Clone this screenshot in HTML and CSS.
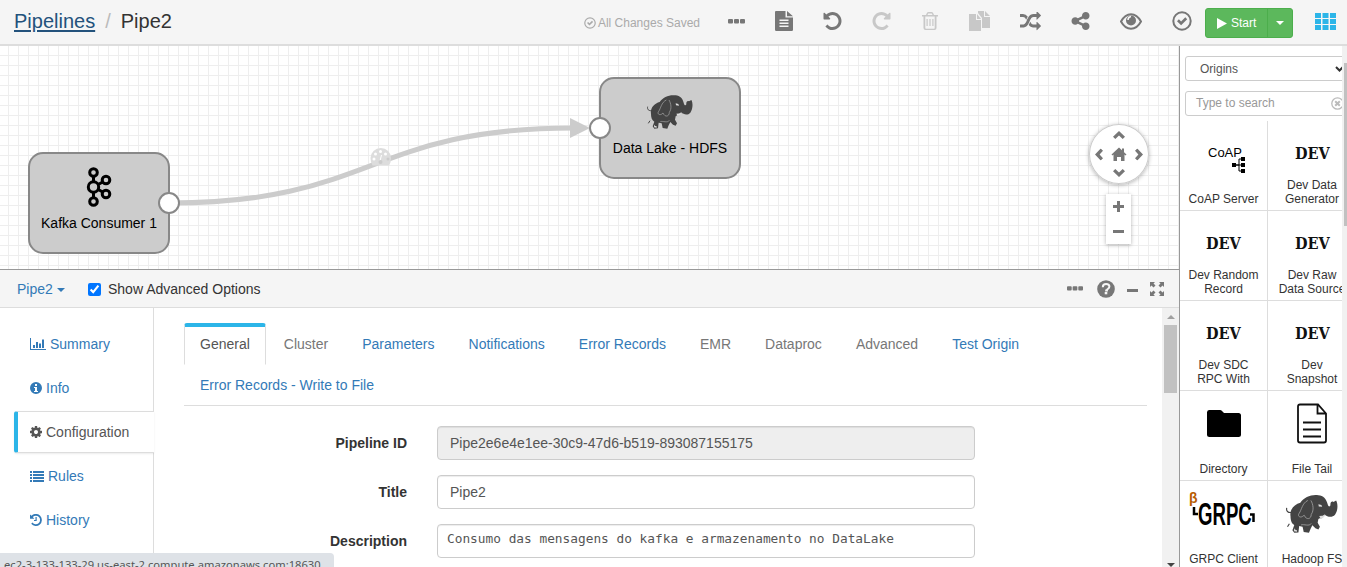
FILE: index.html
```html
<!DOCTYPE html>
<html lang="en">
<head>
<meta charset="utf-8">
<title>Pipe2</title>
<link rel="stylesheet" href="styles.css">
</head>
<body>
<svg class="defs" aria-hidden="true">
  <symbol id="dots" viewBox="0 0 17 5"><rect width="5" height="4.5" rx="1"/><rect x="6" width="5" height="4.5" rx="1"/><rect x="12" width="5" height="4.5" rx="1"/></symbol>
  <symbol id="undo" viewBox="128 128 1536 1536"><path d="M1664 896q0 156-61 298t-164 245-245 164-298 61q-172 0-327-72.500t-264-204.500q-7-10-6.500-22.500t8.500-20.500l137-138q10-9 25-9 16 2 23 12 73 95 179 147t225 52q104 0 198.500-40.500t163.500-109.500 109.500-163.500 40.500-198.500-40.500-198.500-109.500-163.500-163.500-109.500-198.500-40.500q-98 0-188 35.500t-160 101.500l137 138q31 30 14 69-17 40-59 40h-448q-26 0-45-19t-19-45v-448q0-42 40-59 39-17 69 14l130 129q107-101 244.500-156.500t284.500-55.500q156 0 298 61t245 164 164 245 61 298z"/></symbol>
  <symbol id="check" viewBox="0 0 20 20"><circle cx="10" cy="10" r="8.700" fill="none" stroke="currentColor" stroke-width="2"/><path d="M5 10.200l1.900-1.900 2.200 2.200 4.200-4.200 1.900 1.900-6.100 6.100z"/></symbol>
  <symbol id="elephant" viewBox="0 0 138 108">
    <path d="M12 60C9 42 22 28 38 24C48 9 68 1 86 4C99 5 107 14 110 26C112 35 116 36 118 31C117 24 121 19 126 22L133 18C139 28 137 47 130 56C123 64 111 63 102 55C98 59 92 64 86 67L84 77L90 88L86 95L78 92L70 84L65 94L61 104L47 102L44 88L35 86L33 103L22 104L17 97L22 83C14 79 12 69 12 60Z"/>
    <path d="M14 50C5 51 0 46 2 38M9 80L4 88" fill="none" stroke="currentColor" stroke-width="3"/>
    <path class="line" d="M58 18C43 25 41 44 35 52C29 60 39 67 48 57C54 71 67 68 67 55C75 44 72 28 66 18M40 83C47 80 62 88 67 79M103 56Q96 68 88 66"/>
    <path class="light" d="M86 28l8 2 2 5-9-1zM103 58q-2 7-11 8l-4-7zM22 92q2 5 7 5v4l-8-1z"/>
  </symbol>
  <symbol id="chev" viewBox="0 0 12 8"><path d="M6 0l6 5.700L9.700 8 6 4.600 2.300 8 0 5.700z"/></symbol>
</svg>

<header class="topbar">
  <div class="crumbs"><a>Pipelines</a><span class="slash">/</span><span>Pipe2</span></div>
  <div class="actions">
    <span class="saved"><svg width="12" height="12"><use href="#check"/></svg>All Changes Saved</span>
    <div class="tools">
      <svg width="17" height="5"><use href="#dots"/></svg>
      <svg width="18" height="20" viewBox="0 0 18 20"><path fill-rule="evenodd" d="M1 0h9.500v6.500h7.500v12.300q0 1.200-1.200 1.200H1.200Q0 20 0 18.800V1Q0 0 1 0zM4.500 8.500v1.500h9V8.500zm0 3v1.500h9v-1.500zm0 3v1.500h9v-1.500zM12 0l6 5.300h-6z"/></svg>
      <svg width="19" height="18"><use href="#undo"/></svg>
      <svg class="off" width="19" height="18" viewBox="0 0 19 18"><g transform="matrix(-1 0 0 1 19 0)"><use href="#undo" width="19" height="18"/></g></svg>
      <svg class="off" width="18" height="18" viewBox="0 0 18 18"><path fill-rule="evenodd" d="M1 3h4l1-2.300Q6.500 0 7.500 0h3q1 0 1.500.7L13 3h4v1.500h-1.500V16q0 2-2 2h-9q-2 0-2-2V4.500H1zM6.500 3h5l-.7-1.500H7.200zM4.300 4.500V16q0 .7.7.7h8q.7 0 .7-.7V4.500zM5.500 7h1.200v7H5.500zm2.900 0h1.200v7H8.400zm2.900 0h1.200v7h-1.200z"/></svg>
      <svg class="off" width="21" height="20" viewBox="0 0 21 20"><path d="M0 3h7v6h5v11H0zM8 3l4 5H8zM9 0h6v6h6v11h-8V7L9 2zM16 0l5 5h-5z"/></svg>
      <svg width="21" height="19" viewBox="0 160 1792 1472"><path d="M666 481q-60 92-137 273-22-45-37-72.500t-40.500-63.500-51-56.500-63-35-81.500-14.500h-224q-14 0-23-9t-9-23v-192q0-14 9-23t23-9h224q250 0 410 225zm1126 799q0 14-9 23l-320 320q-9 9-23 9-13 0-22.500-9.500t-9.500-22.500v-192q-32 0-85 .5t-81 1-73-1-71-5-64-10.500-63-18.500-58-28.500-59-40-55-53.500-56-69.500q59-93 136-273 22 45 37 72.500t40.500 63.500 51 56.500 63 35 81.500 14.500h256v-192q0-14 9-23t23-9q12 0 24 10l319 319q9 9 9 23zm0-896q0 14-9 23l-320 320q-9 9-23 9-13 0-22.500-9.500t-9.500-22.500v-192h-256q-48 0-87 15t-69 45-51 61.500-45 77.500q-32 62-78 171-29 66-49.500 111t-54 105-64 100-74 83-90 68.500-106.500 42-128 16.500h-224q-14 0-23-9t-9-23v-192q0-14 9-23t23-9h224q48 0 87-15t69-45 51-61.500 45-77.500q32-62 78-171 29-66 49.500-111t54-105 64-100 74-83 90-68.500 106.500-42 128-16.500h256v-192q0-14 9-23t23-9q12 0 24 10l319 319q9 9 9 23z"/></svg>
      <svg width="19" height="18" viewBox="128 128 1536 1536"><path d="M1344 1024q133 0 226.500 93.500t93.500 226.500-93.500 226.500-226.500 93.500-226.500-93.500-93.500-226.500q0-12 2-34l-360-180q-92 86-218 86-133 0-226.500-93.500t-93.500-226.500 93.500-226.500 226.500-93.500q126 0 218 86l360-180q-2-22-2-34 0-133 93.500-226.500t226.500-93.500 226.500 93.500 93.500 226.500-93.500 226.500-226.500 93.500q-126 0-218-86l-360 180q2 22 2 34t-2 34l360 180q92-86 218-86z"/></svg>
      <svg width="22" height="17" viewBox="0 0 22 17"><path d="M1 8.500Q5 1.200 11 1.200T21 8.500Q17 15.800 11 15.800T1 8.500z" fill="none" stroke="currentColor" stroke-width="2"/><circle cx="11" cy="7.500" r="5"/><path d="M8 7q0-3 3-3.500" fill="none" stroke="#f5f5f5" stroke-width="1.500"/></svg>
      <svg width="20" height="20"><use href="#check"/></svg>
    </div>
    <div class="start"><span class="go"><svg width="10" height="11" viewBox="0 0 10 11"><path d="M0 0l10 5.500L0 11z"/></svg>Start</span><span class="more"><i class="caret"></i></span></div>
    <svg class="apps" width="21" height="17" viewBox="0 0 21 17"><path d="M0 0h6v5H0zM7.500 0h6v5h-6zM15 0h6v5h-6zM0 6h6v5H0zM7.500 6h6v5h-6zM15 6h6v5h-6zM0 12h6v5H0zM7.500 12h6v5h-6zM15 12h6v5h-6z"/></svg>
  </div>
</header>

<div class="workspace">
  <main class="main">
    <section class="canvas">
      <svg class="graph" width="1179" height="224" viewBox="0 45 1179 224">
        <path class="edge" d="M169 203C374 203 368 128 574 128"/>
        <path class="arrow" d="M570 118l20 10-20 10z"/>
        <g><path class="gauge" d="M370.500 158a10.300 10 0 0 1 20.600 0q0 4-2 7.500h-16.600q-2-3.500-2-7.500z"/><g fill="#fff"><circle cx="374" cy="159" r="1.500"/><circle cx="375.500" cy="154" r="1.500"/><circle cx="380.500" cy="151.500" r="1.500"/><circle cx="385.500" cy="154" r="1.500"/></g><circle cx="388" cy="159" r="1.500" fill="#ccc"/><path d="M380 161l1.500-6" stroke="#fff"/><circle cx="380.500" cy="162" r="2" fill="#ccc"/></g>
        <rect class="node" x="29" y="153" width="140" height="100" rx="14"/>
        <rect class="node" x="600" y="78" width="140" height="100" rx="14"/>
        <g class="kafka"><path d="M93.500 173v28M94 187l12-7M94 187l12 7"/><circle cx="93.500" cy="172.500" r="3.800"/><circle cx="93.500" cy="187" r="5.200"/><circle cx="93.500" cy="201.500" r="3.800"/><circle cx="106" cy="180" r="3.800"/><circle cx="106" cy="194" r="3.800"/></g>
        <use class="eleph" href="#elephant" x="647" y="94" width="46" height="36"/>
        <circle class="port" cx="169" cy="203" r="10"/><circle class="port" cx="600" cy="128" r="10"/>
        <text x="99" y="228">Kafka Consumer 1</text><text x="670" y="153">Data Lake - HDFS</text>
      </svg>
      <div class="pan"><svg width="60" height="60" viewBox="0 0 60 60"><use href="#chev" x="24" y="7" width="12" height="8"/><use href="#chev" x="24" y="7" width="12" height="8" transform="rotate(180 30 30)"/><use href="#chev" x="24" y="6.500" width="12" height="8" transform="rotate(90 30 30.500)"/><use href="#chev" x="24" y="6.500" width="12" height="8" transform="rotate(270 30 30.500)"/><path d="M30 23.500l7.500 7-1 1-1-.9V37h-3.500v-4h-4v4h-3.500v-6.400l-1 .9-1-1zM33 24.500h2v3.500h-2z"/></svg></div>
      <div class="zoom"><svg width="25" height="50" viewBox="0 0 25 50"><path d="M11 7h3v4h4v3h-4v4h-3v-4H7v-3h4zM7 36h11v3H7z"/></svg></div>
    </section>

    <section class="detail">
      <div class="detail-head">
        <a class="pipe">Pipe2 <i class="caret"></i></a>
        <label class="adv"><input type="checkbox" checked>Show Advanced Options</label>
        <div class="head-icons">
          <svg width="16" height="5"><use href="#dots"/></svg>
          <svg class="help" width="18" height="18" viewBox="0 0 18 18"><circle cx="9" cy="9" r="8.800"/><path d="M5.800 7.200q0-3.300 3.300-3.300t3.300 2.700q0 1.500-1.500 2.300-1 .5-1 1.600H8.200" fill="none" stroke="#f5f5f5" stroke-width="2"/><path d="M7.700 12h2.600v2.300H7.700z" fill="#f5f5f5"/></svg>
          <svg class="min" width="11" height="3" viewBox="0 0 11 3"><rect width="11" height="3"/></svg>
          <svg width="14" height="14" viewBox="0 0 14 14"><path id="cor" d="M0 0h5L3.500 1.500 5.500 3.500 3.500 5.500 1.500 3.500 0 5z"/><use href="#cor" transform="rotate(90 7 7)"/><use href="#cor" transform="rotate(180 7 7)"/><use href="#cor" transform="rotate(270 7 7)"/></svg>
        </div>
      </div>
      <div class="detail-body">
        <nav class="side">
          <a><svg width="16" height="12" viewBox="0 0 16 12"><path d="M0 0h1v11h15v1H0zM3 7h2v3H3zM6 4h2v6H6zM9 5.500h2V10H9zM12 1.500h2V10h-2z"/></svg>Summary</a>
          <a><svg width="12" height="12" viewBox="0 0 12 12"><path fill-rule="evenodd" d="M6 0a6 6 0 1 1 0 12A6 6 0 0 1 6 0zM5 2v2h2V2zM4 5v1h1v3H4v1h4V9H7V5z"/></svg>Info</a>
          <a class="active"><svg width="12" height="12" viewBox="128 128 1536 1536"><path d="M1152 896q0-106-75-181t-181-75-181 75-75 181 75 181 181 75 181-75 75-181zm512-109v222q0 12-8 23t-20 13l-185 28q-19 54-39 91 35 50 107 138 10 12 10 25t-9 23q-27 37-99 108t-94 71q-12 0-26-9l-138-108q-44 23-91 38-16 136-29 186-7 28-36 28h-222q-14 0-24.500-8.500t-11.500-21.500l-28-184q-49-16-90-37l-141 107q-10 9-25 9-14 0-25-11-126-114-165-168-7-10-7-23 0-12 8-23 15-21 51-66.500t54-70.500q-27-50-41-99l-183-27q-13-2-21-12.500t-8-23.500v-222q0-12 8-23t19-13l186-28q14-46 39-92-40-57-107-138-10-12-10-24 0-10 9-23 26-36 98.500-107.500t94.500-71.500q13 0 26 10l138 107q44-23 91-38 16-136 29-186 7-28 36-28h222q14 0 24.500 8.500t11.500 21.500l28 184q49 16 90 37l142-107q9-9 24-9 13 0 25 10 129 119 165 170 7 8 7 22 0 12-8 23-15 21-51 66.500t-54 70.500q26 50 41 98l183 28q13 2 21 12.500t8 23.500z"/></svg>Configuration</a>
          <a><svg width="14" height="11" viewBox="0 0 14 11"><path d="M0 0h2v2H0zM3 0h11v2H3zM0 3h2v2H0zM3 3h11v2H3zM0 6h2v2H0zM3 6h11v2H3zM0 9h2v2H0zM3 9h11v2H3z"/></svg>Rules</a>
          <a><svg width="12" height="12" viewBox="0 0 12 12"><path d="M0 .5l1.500 1.300A6 6 0 1 1 1.200 9.700L2.500 8.500A4.200 4.200 0 1 0 2.800 3.100L4.300 4.700H0zM5.500 3h1.200v4H4V5.900h1.500z"/></svg>History</a>
        </nav>
        <div class="content">
          <div class="tabs">
            <a class="on">General</a><a class="dim">Cluster</a><a>Parameters</a><a>Notifications</a><a>Error Records</a><a class="dim">EMR</a><a class="dim">Dataproc</a><a class="dim">Advanced</a><a>Test Origin</a><a>Error Records - Write to File</a>
          </div>
          <div class="form">
            <label>Pipeline ID</label><div class="field ro">Pipe2e6e4e1ee-30c9-47d6-b519-893087155175</div>
            <label>Title</label><div class="field">Pipe2</div>
            <label>Description</label><div class="field code">Consumo das mensagens do kafka e armazenamento no DataLake</div>
          </div>
        </div>
        <div class="vscroll"><i class="up"></i><i class="thumb"></i><i class="down"></i></div>
      </div>
    </section>
  </main>

  <aside class="library">
    <div class="lib-inner">
      <div class="select">Origins<svg width="9" height="6" viewBox="0 0 9 6"><path d="M1 1l3.500 3.500L8 1" fill="none" stroke="#333" stroke-width="2"/></svg></div>
      <div class="search">Type to search<svg width="13" height="13" viewBox="0 0 13 13"><circle cx="6.500" cy="6.500" r="5.700" fill="none" stroke="#bbb" stroke-width="1.300"/><path d="M4.200 4.200l4.600 4.600m0-4.600L4.200 8.800" stroke="#bbb" stroke-width="2"/></svg></div>
      <div class="stages">
        <div class="stage"><svg width="60" height="42" viewBox="0 0 60 42"><text class="coap" x="14" y="24">CoAP</text><path d="M39 32h6v-6h5M39 32h11M45 32v6h5" fill="none" stroke="#000"/><path d="M47 24h4v4h-4zM47 30h4v4h-4zM47 36h4v4h-4zM38 30h4v4h-4z"/></svg><span>CoAP Server</span></div>
        <div class="stage"><b>DEV</b><span>Dev Data<br>Generator</span></div>
        <div class="stage"><b>DEV</b><span>Dev Random<br>Record</span></div>
        <div class="stage"><b>DEV</b><span>Dev Raw<br>Data Source</span></div>
        <div class="stage"><b>DEV</b><span>Dev SDC<br>RPC With</span></div>
        <div class="stage"><b>DEV</b><span>Dev<br>Snapshot</span></div>
        <div class="stage"><svg width="60" height="42" viewBox="0 0 60 42"><path d="M15 7q-2 0-2 2.500v22q0 2.500 2.500 2.500h29q2.500 0 2.500-2.500v-19q0-2.500-2.500-2.500H30l-2-2q-.7-1-2-1z"/></svg><span>Directory</span></div>
        <div class="stage"><svg width="60" height="42" viewBox="0 0 60 42"><path d="M18 1.500h18l8 9v27q0 2-2 2H18q-2 0-2-2v-34q0-2 2-2zM35.500 2v8.500h8M21 19.500h18M21 26.500h18M21 33.500h18" fill="none" stroke="#111" stroke-width="1.800"/></svg><span>File Tail</span></div>
        <div class="stage"><svg class="grpc" width="80" height="42" viewBox="0 0 80 42"><text class="beta" x="5" y="10">β</text><text class="g" transform="matrix(.6 0 0 1 14 32)">GRPC</text><path d="M10 14v7h4M66 21.500h3.500V29" fill="none" stroke="#000" stroke-width="2.500"/></svg><span>GRPC Client</span></div>
        <div class="stage"><svg class="eleph" width="52" height="42"><use href="#elephant"/></svg><span>Hadoop FS</span></div>
      </div>
    </div>
    <div class="lib-scroll"><i></i></div>
  </aside>
</div>
<div class="status">ec2-3-133-133-29.us-east-2.compute.amazonaws.com:18630</div>
</body>
</html>
```
FILE: styles.css
```css
* { box-sizing: border-box; }
body { margin: 0; width: 1347px; height: 567px; overflow: hidden; position: relative; font: 14px/20px "Liberation Sans", Arial, sans-serif; color: #333; background: #fff; }
svg { display: block; fill: currentColor; flex: none; }
.defs { position: absolute; width: 0; height: 0; }
.caret { display: inline-block; border: 4px solid transparent; border-top-color: currentColor; border-bottom: 0; vertical-align: middle; }

.topbar { height: 46px; background: #f5f5f5; border-bottom: 2px solid #ddd; display: flex; justify-content: space-between; padding: 0 11px 0 14px; }
.crumbs { font-size: 20px; line-height: 42px; }
.crumbs a { color: #23527c; text-decoration: underline; text-decoration-thickness: 2px; text-underline-offset: 2px; text-decoration-skip-ink: auto; }
.slash { color: #bbb; margin: 0 10px; }
.actions { display: flex; align-items: center; color: #777; height: 42px; }
.saved { display: flex; align-items: center; gap: 2px; font-size: 12px; color: #aaa; margin-right: 28px; padding-top: 3px; }
.tools { display: flex; align-items: center; gap: 30px; margin-right: 13px; }
.off { color: #c8c8c8; }
.start { display: flex; width: 88px; height: 30px; margin: 4px 22px 0 0; color: #fff; background: #5cb85c; border: 1px solid #4cae4c; border-radius: 3px; font-size: 12px; }
.go { display: flex; align-items: center; gap: 4px; width: 62px; padding-left: 11px; border-right: 1px solid #4cae4c; }
.more { flex: 1; display: flex; align-items: center; justify-content: center; }
.apps { color: #2cb5e8; }

.workspace { display: flex; height: 521px; }
.main { width: 1180px; border-right: 1px solid #999; display: flex; flex-direction: column; }
.canvas { position: relative; height: 223px; overflow: hidden; background-image: linear-gradient(to right, #eee 1px, transparent 1px), linear-gradient(#eee 1px, transparent 1px); background-size: 10px 10px; background-position: 8px 9px; }
.graph { margin-top: -1px; }
.graph text { font-size: 14px; text-anchor: middle; fill: #000; }
.edge { fill: none; stroke: #ccc; stroke-width: 5; }
.arrow { fill: #ccc; }
.gauge { fill: #ddd; }
.node { fill: #ccc; stroke: #888; stroke-width: 2; }
.port { fill: #fff; stroke: #888; stroke-width: 2; }
.kafka { fill: none; stroke: #000; stroke-width: 3; }
.kafka circle { fill: #ccc; }
.eleph { color: #444; fill: #444; }
.line { fill: none; stroke: #aaa; stroke-width: 2; }
.light { fill: #ddd; }
.pan { position: absolute; left: 1089px; top: 78px; width: 60px; height: 60px; border-radius: 50%; background: #fff; color: #777; box-shadow: inset 0 0 0 1px #ccc, 0 1px 4px rgba(0,0,0,.3); }
.zoom { position: absolute; left: 1106px; top: 148px; width: 25px; height: 50px; background: #fff; color: #777; box-shadow: 0 1px 4px rgba(0,0,0,.3); }

.detail { flex: 1; border-top: 1px solid #999; display: flex; flex-direction: column; min-height: 0; }
.detail-head { height: 38px; background: #f5f5f5; border-bottom: 1px solid #ddd; display: flex; align-items: center; padding: 0 15px 0 17px; }
.pipe { color: #337ab7; width: 71px; }
.adv { display: flex; align-items: center; gap: 7px; }
.adv input { margin: 1px 0 0; width: 13px; height: 13px; }
.head-icons { margin-left: auto; display: flex; align-items: center; color: #777; }
.help { margin: 0 12px 0 14px; }
.min { margin: 3px 12px 0 0; }
.detail-body { flex: 1; display: flex; min-height: 0; background: #fff; overflow: hidden; }
.side { width: 154px; padding: 15px 0 0 14px; display: flex; flex-direction: column; gap: 2px; background: linear-gradient(#ddd, #ddd) right / 1px 100% no-repeat; }
.side a { display: flex; align-items: center; gap: 4px; height: 42px; padding-left: 16px; color: #337ab7; flex: none; }
.side .active { color: #555; background: #fff; border: 1px solid #ddd; border-left: 4px solid #2cb5e8; border-right: 0; border-radius: 3px 0 0 3px; padding-left: 12px; box-shadow: 0 1px 2px rgba(0,0,0,.08); }
.content { width: 1008px; padding: 15px 15px 0 30px; }
.tabs { display: flex; flex-wrap: wrap; border-bottom: 1px solid #ddd; }
.tabs a { height: 42px; margin: 0 2px -1px 0; padding: 11px 16px; color: #337ab7; }
.tabs .dim { color: #777; }
.tabs .on { color: #555; border: 1px solid #ddd; border-top: 4px solid #2cb5e8; border-bottom-color: transparent; border-radius: 3px 3px 0 0; padding: 7px 15px; }
.form { display: grid; grid-template-columns: 223px 538px; column-gap: 30px; row-gap: 15px; padding-top: 20px; }
.form label { font-weight: bold; text-align: right; line-height: 34px; }
.field { height: 34px; border: 1px solid #ccc; border-radius: 4px; padding: 6px 12px; color: #555; box-shadow: inset 0 1px 1px rgba(0,0,0,.075); white-space: nowrap; }
.ro { background: #eee; }
.code { font: 12.800px/18px "DejaVu Sans Mono", monospace; padding: 5px 9px; }
.vscroll { width: 17px; background: #f1f1f1; display: flex; flex-direction: column; align-items: center; height: 259px; }
.up { border: 4px solid transparent; border-bottom-color: #a0a0a0; border-top: 0; margin: 7px 0 6px; }
.thumb { width: 13px; height: 68px; background: #c1c1c1; }
.down { border: 4px solid transparent; border-top-color: #444; border-bottom: 0; margin: auto 0 0; }

.library { width: 167px; display: flex; height: 521px; overflow: hidden; }
.lib-inner { width: 162px; overflow: hidden; padding-top: 10px; }
.select, .search { width: 176px; margin-left: 5px; height: 25px; border: 1px solid #ccc; border-radius: 3px; font-size: 12px; line-height: 25px; color: #555; display: flex; align-items: center; }
.select { padding: 2px 0 0 14px; }
.select svg { margin: -2px 0 0 97px; }
.search { margin-top: 10px; padding-left: 10px; color: #999; }
.search svg { margin-left: auto; margin-right: 16px; }
.stages { width: 177px; display: grid; grid-template-columns: 88px 89px; grid-auto-rows: 90px; margin-top: 5px; }
.stage { border-right: 1px solid #ddd; border-bottom: 1px solid #ddd; display: flex; flex-direction: column; align-items: center; justify-content: space-between; padding: 12px 0 4px; text-align: center; }
.stage span { font-size: 12px; line-height: 14px; white-space: nowrap; }
.stage svg { color: #000; overflow: visible; }
.stage .eleph { color: #444; }
.stage b { font: bold 17px/40px "DejaVu Serif", serif; color: #111; height: 36px; transform: scaleX(.85); }
.coap { font-size: 13px; }
.beta { font-size: 14px; font-weight: bold; fill: #b85c00; }
.g { font-size: 31px; font-weight: bold; }
.lib-scroll { width: 5px; background: #f1f1f1; padding: 17px 0 0 2px; }
.lib-scroll i { display: block; height: 163px; background: #c1c1c1; }

.status { position: absolute; left: 0; top: 553px; width: 334px; height: 14px; padding: 3px 0 0 4px; overflow: hidden; background: #dee2e7; border-radius: 0 4px 0 0; font: 11.200px/18px "Noto Sans", "Open Sans", sans-serif; color: #555; white-space: nowrap; }
```
